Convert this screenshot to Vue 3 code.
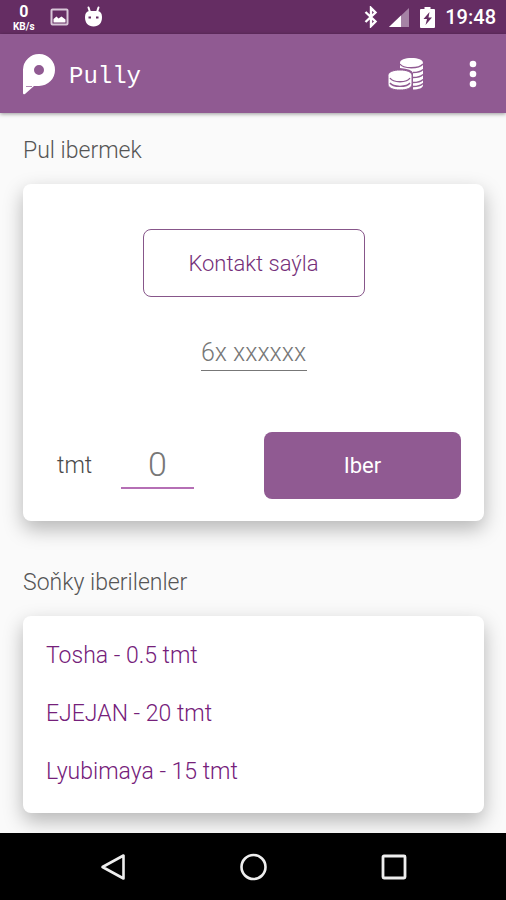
<script setup>
import { ref } from 'vue'

const phone = ref('')
const amount = ref('')
const recent = [
  { name: 'Tosha', amount: '0.5' },
  { name: 'EJEJAN', amount: '20' },
  { name: 'Lyubimaya', amount: '15' },
]
</script>

<template>
  <div class="screen">
    <div class="status">
      <div class="status-left">
        <div class="speed"><span class="speed-value">0</span><span class="speed-unit">KB/s</span></div>
        <svg width="19" height="19" viewBox="0 0 19 19">
          <rect x="1.500" y="1.500" width="16" height="15" rx="1" fill="none" stroke="#d8c6d8" stroke-width="2" />
          <path d="M3.500 14.500V11l3-2.500 2 2 3-2 4 3v3z" fill="#fff" />
        </svg>
        <svg width="19" height="22" viewBox="0 0 19 22">
          <path d="M4.500 1.500L6 6M14.500 1.500L13 6" stroke="#fff" stroke-width="2" stroke-linecap="round" />
          <path d="M5 5h9q4 1 4 6c0 6-3 9.500-8.500 9.500S1 17 1 11q0-5 4-6z" fill="#fff" />
          <path d="M4.500 11.500h2.500M12 11.500h2.500" stroke="#652d63" stroke-width="1.800" />
        </svg>
      </div>
      <div class="status-right">
        <svg width="14" height="22" viewBox="0 0 14 22">
          <path d="M1.500 6l10 9.500L7 20V2l4.500 4.500L1.500 16" fill="none" stroke="#fff" stroke-width="2.400" />
        </svg>
        <svg class="signal" width="20" height="19" viewBox="0 0 20 19">
          <path d="M20 0v19H0z" fill="#a583a5" />
          <path d="M12 7.600V19H0z" fill="#fff" />
        </svg>
        <svg class="battery" width="15" height="21" viewBox="0 0 15 21">
          <path d="M4.500 0h6v2H14q1 0 1 1v17q0 1-1 1H1q-1 0-1-1V3q0-1 1-1h3.500z" fill="#fff" />
          <path d="M9.500 5L3.500 12H7l-1.500 6L12 10.500H8.500z" fill="#652d63" />
        </svg>
        <span class="time">19:48</span>
      </div>
    </div>

    <header class="bar">
      <svg class="logo" width="33" height="42" viewBox="0 0 33 42">
        <path fill-rule="evenodd" d="M1 16.500A16 16 0 1 1 17 33H12L3 41q-2 1-2-1zM12 17a5 5 0 1 0 10 0a5 5 0 1 0-10 0z" fill="#fff" />
        <path d="M4 33.500h6" stroke="#b08ab2" stroke-width="1" />
      </svg>
      <h1>Pully</h1>
      <button class="icon coins" type="button" aria-label="Balans">
        <svg width="36" height="33" viewBox="0 0 36 33">
          <path d="M12 6C12 2.500 17 1 23.500 1S35 2.500 35 6v22c0 3-4 4.500-10 4.500V16q-1-4-13-5z" fill="#fff" />
          <path d="M12 7c3 5 19 5 23 0M25 15.500q7 0 10-3M25 20.500q7 0 10-3M25 25.500q7 0 10-3M25 29.500q7 0 10-3" fill="none" stroke="#905a92" stroke-width="1.300" />
          <path d="M0 18.500C0 15 5 13 12 13s12 2 12 5.500V27c0 4-5 6-12 6S0 31 0 27z" fill="#fff" stroke="#905a92" stroke-width="1" />
          <path d="M2 21c3 5 17 5 20 0M2 26c3 4.500 17 4.500 20 0" fill="none" stroke="#905a92" stroke-width="1.400" />
        </svg>
      </button>
      <button class="icon" type="button" aria-label="Menýu">
        <svg width="8" height="28" viewBox="0 0 8 28">
          <circle cx="4" cy="4" r="3.300" fill="#fff" /><circle cx="4" cy="14" r="3.300" fill="#fff" /><circle cx="4" cy="24" r="3.300" fill="#fff" />
        </svg>
      </button>
    </header>

    <main>
      <h2>Pul ibermek</h2>
      <form class="card send" @submit.prevent>
        <button class="contact" type="button">Kontakt saýla</button>
        <input v-model="phone" class="phone" type="tel" placeholder="6x xxxxxx" aria-label="Telefon" />
        <div class="row">
          <label for="amount">tmt</label>
          <input id="amount" v-model="amount" class="amount" inputmode="decimal" placeholder="0" />
          <button class="submit" type="submit">Iber</button>
        </div>
      </form>
      <h2>Soňky iberilenler</h2>
      <ul class="card recent">
        <li v-for="item in recent" :key="item.name">{{ item.name }} - {{ item.amount }} tmt</li>
      </ul>
    </main>

    <nav>
      <button class="icon" type="button" aria-label="Back">
        <svg width="28" height="28" viewBox="0 0 28 28"><path d="M24.500 2.500v23L3.500 14z" fill="none" stroke="#eee" stroke-width="2.600" stroke-linejoin="round" /></svg>
      </button>
      <button class="icon" type="button" aria-label="Home">
        <svg width="28" height="28" viewBox="0 0 28 28"><circle cx="14.500" cy="14" r="12" fill="none" stroke="#eee" stroke-width="2.600" /></svg>
      </button>
      <button class="icon" type="button" aria-label="Overview">
        <svg width="28" height="28" viewBox="0 0 28 28"><rect x="4" y="3" width="22" height="22" rx="1" fill="none" stroke="#eee" stroke-width="2.800" /></svg>
      </button>
    </nav>
  </div>
</template>

<style>
body {
  margin: 0;
  background: #fafafa;
}
</style>

<style scoped>
.screen {
  display: flex;
  flex-direction: column;
  min-height: 100vh;
  overflow: hidden;
  background: #fafafa;
  font-family: Roboto, sans-serif;
}
button,
input {
  font: inherit;
  border: 0;
  padding: 0;
  background: none;
  box-sizing: border-box;
}
svg {
  display: block;
}
.status {
  display: flex;
  justify-content: space-between;
  align-items: center;
  height: 34px;
  padding: 0 10px 0 13px;
  background: #652d63;
  color: #fff;
}
.status-left,
.status-right {
  display: flex;
  align-items: center;
}
.status-left {
  gap: 15px;
}
.speed {
  display: flex;
  flex-direction: column;
  align-items: center;
  font-weight: 700;
}
.speed-value {
  font-size: 16px;
  line-height: 19px;
}
.speed-unit {
  font-size: 10px;
  line-height: 12px;
}
.signal {
  margin-left: 11px;
}
.battery {
  margin-left: 11px;
}
.time {
  margin-left: 10px;
  font-size: 20px;
  font-weight: 500;
}
.bar {
  display: flex;
  align-items: center;
  height: 79px;
  padding: 0 29px 0 22px;
  box-sizing: border-box;
  background: #905a92;
  box-shadow: 0 1px 4px rgba(0, 0, 0, 0.4);
}
h1 {
  flex: 1;
  margin: 6px 0 0 14px;
  font-family: "Liberation Mono", monospace;
  font-size: 24px;
  line-height: 28px;
  font-weight: 400;
  color: #fff;
}
.coins {
  margin-right: 45px;
}
main {
  flex: 1;
  padding: 0 22px 19px 23px;
}
h2 {
  margin: 0;
  padding: 25px 0 20px;
  font-size: 23px;
  line-height: 26px;
  font-weight: 300;
  color: #555;
}
.card {
  border-radius: 8px;
  background: #fff;
  box-shadow: 0 8px 20px rgba(0, 0, 0, 0.28);
}
.send {
  display: flex;
  flex-direction: column;
  align-items: center;
  margin-bottom: 24px;
  padding: 45px 23px 22px 34px;
}
.contact {
  width: 222px;
  height: 68px;
  margin-right: 11px;
  border: 1px solid #87568a;
  border-radius: 8px;
  font-size: 22px;
  color: #75307a;
  font-weight: 300;
}
.phone {
  width: 106px;
  height: 36px;
  margin: 38px 11px 61px 0;
  border-bottom: 1px solid #777;
  font-size: 25px;
  text-align: center;
  font-weight: 300;
}
input::placeholder {
  color: #777;
  opacity: 1;
}
.row {
  display: flex;
  align-items: center;
  width: 100%;
}
label {
  width: 64px;
  font-size: 23px;
  color: #4a4a4a;
  font-weight: 300;
}
.amount {
  width: 73px;
  height: 46px;
  padding-bottom: 2px;
  border-bottom: 2px solid #b56fb5;
  font-size: 34px;
  text-align: center;
  font-weight: 300;
}
.submit {
  width: 197px;
  height: 67px;
  margin-left: auto;
  border-radius: 8px;
  background: #905a92;
  color: #fff;
  font-size: 22px;
}
.recent {
  margin: 0;
  padding: 11px 23px 12px;
  list-style: none;
}
.recent li {
  font-size: 23px;
  line-height: 58px;
  font-weight: 300;
  color: #75207a;
}
nav {
  position: relative;
  display: flex;
  justify-content: center;
  align-items: center;
  gap: 112px;
  height: 67px;
  background: #000;
}
</style>
